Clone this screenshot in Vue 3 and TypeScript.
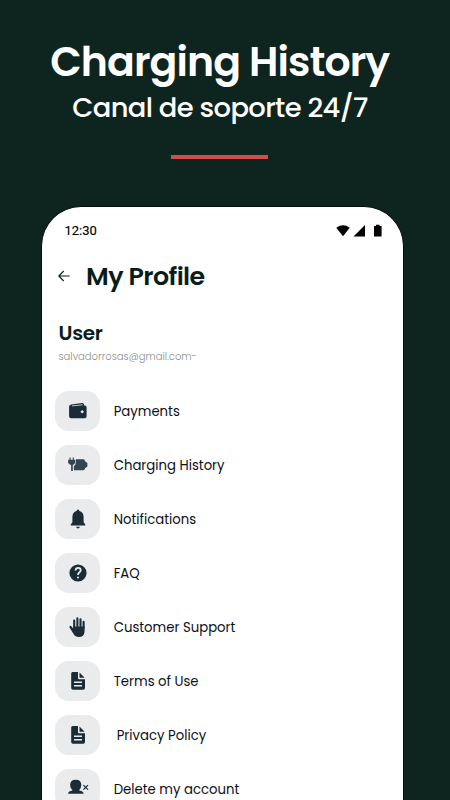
<script setup lang="ts">
interface MenuItem {
  icon: 'wallet' | 'charge' | 'bell' | 'help' | 'hand' | 'doc' | 'user'
  label: string
  indent?: boolean
}

const items: MenuItem[] = [
  { icon: 'wallet', label: 'Payments' },
  { icon: 'charge', label: 'Charging History' },
  { icon: 'bell', label: 'Notifications' },
  { icon: 'help', label: 'FAQ' },
  { icon: 'hand', label: 'Customer Support' },
  { icon: 'doc', label: 'Terms of Use' },
  { icon: 'doc', label: 'Privacy Policy', indent: true },
  { icon: 'user', label: 'Delete my account' },
]
</script>

<template>
  <main class="page">
    <header class="hero">
      <h1 class="title">Charging History</h1>
      <p class="subtitle">Canal de soporte 24/7</p>
      <div class="rule"></div>
    </header>

    <section class="phone">
      <div class="status">
        <span class="time">12:30</span>
        <svg class="status-icons" width="48" height="14" viewBox="0 0 48 14">
          <path d="M0.3 3.7Q7 -1.1 13.7 3.7L7 12.2Z" />
          <path d="M29 1V12.5H17.5Z" />
          <path d="M38 2.1h2V.7h3.6v1.4h2v10.4H38Z" />
        </svg>
      </div>

      <div class="heading">
        <svg class="back" width="12" height="12" viewBox="0 0 12 12">
          <path d="M11.7 6H.8M5.7 1L.8 6l4.9 5" />
        </svg>
        <h2 class="name">My Profile</h2>
      </div>

      <div class="account">
        <h3 class="user">User</h3>
        <p class="email">salvadorrosas@gmail.com-</p>
      </div>

      <ul class="menu">
        <li v-for="item in items" :key="item.label" class="row">
          <span class="tile">
            <svg class="icon" width="22" height="20" viewBox="0 0 22 20">
              <template v-if="item.icon === 'wallet'">
                <path d="M2.1 5.5Q2.1 3.7 4.2 3.4L15 2Q16.9 1.8 17.1 3.8V4.6H17.8Q19.6 4.6 19.6 6.6V15.3Q19.6 17.3 17.8 17.3H4.1Q2.1 17.3 2.1 15.3Z" />
                <path class="line-light" d="M5 4.9L15.6 3.8" />
                <path class="cut" d="M15.2 9l1.8 1.8-1.8 1.8-1.8-1.8Z" />
              </template>
              <template v-else-if="item.icon === 'charge'">
                <path class="slate" d="M8.8 4.2H16.4Q17.9 4.2 18 6.2L20.4 8V11.4L18 13.2Q17.9 15.2 16.4 15.2H6.9V10.9Q8.8 10 8.8 7.8Z" />
                <path class="slate" d="M2.5 2.4h1.1v2.3h2.1V2.4h1.1v2.3h1.3v3.4L6.5 9.7H5.8v6.2H4.1V9.7H3L1.2 8.1V4.7h1.3Z" />
              </template>
              <template v-else-if="item.icon === 'bell'">
                <path d="M11 .6q1.3 0 1.4 1.5Q16.5 3.3 16.6 7.8v5.4l1.7 2.3v1H3.7v-1l1.7-2.3V7.8q.1-4.5 4.2-5.7Q9.7.6 11 .6ZM9.2 17.8h3.6q-.3 1.6-1.8 1.6t-1.8-1.6Z" />
              </template>
              <template v-else-if="item.icon === 'help'">
                <circle cx="11" cy="10" r="8.6" />
                <path class="question" d="M8.5 7.5Q8.7 4.9 11.2 4.9T13.7 7.3Q13.7 8.5 12.3 9.5T11 12" />
                <circle class="cut" cx="11" cy="14.4" r="1" />
              </template>
              <template v-else-if="item.icon === 'hand'">
                <path d="M6.2 9.6H17.6V14Q17.4 20 12 20 8.3 20 6.4 16.8L2.4 10.2Q2.1 9.2 3 8.9 3.8 8.6 4.5 9.4L6.2 11.6Z" />
                <path class="finger" d="M7.2 11V3.6M10.4 11V1.4M13.5 11V2.4M16.6 11V4.8" />
              </template>
              <template v-else-if="item.icon === 'doc'">
                <path d="M5.6 1H11V7.2Q11 8.2 12 8.2H18V17Q18 18.8 16.2 18.8H6Q4.2 18.8 4.2 17V2.5Q4.2 1 5.6 1Z" />
                <path d="M12.5 1.5L17.6 6.8H12.5Z" />
                <path class="doc-line" d="M7 11.3h8M7 14.7h8" />
              </template>
              <template v-else>
                <path d="M8.7.8Q14.3.8 14.3 6 14.2 9 12.3 10.9V11.6Q16.2 12.2 16.7 14.7H1Q1.5 12.2 5.3 11.6V10.9Q3.2 9 3.1 6 3.3.8 8.7.8Z" />
                <path class="cross" d="M16.4 6.1l4.6 4.6M21 6.1l-4.6 4.6" />
              </template>
            </svg>
          </span>
          <span class="label" :class="{ indent: item.indent }">{{ item.label }}</span>
        </li>
      </ul>
    </section>
  </main>
</template>

<style>
body {
  margin: 0;
  background: #0e251f;
}
</style>

<style scoped>
.page {
  box-sizing: border-box;
  width: 450px;
  height: 800px;
  overflow: hidden;
  display: flex;
  flex-direction: column;
  background: #0e251f;
  font-family: Poppins, Inter, "Noto Sans", sans-serif;
  font-feature-settings: "cv11";
}
h1, h2, h3, p, ul {
  margin: 0;
  padding: 0;
}
.hero {
  box-sizing: border-box;
  flex: none;
  height: 206px;
  padding-top: 38px;
  display: flex;
  flex-direction: column;
  align-items: center;
  color: #fff;
  white-space: nowrap;
}
.title {
  font-size: 41px;
  line-height: 48px;
  font-weight: 600;
  letter-spacing: -0.022em;
  margin-right: 10.5px;
}
.subtitle {
  font-size: 27.4px;
  line-height: 44px;
  font-weight: 500;
  letter-spacing: -0.023em;
  margin-right: 10px;
}
.rule {
  width: 97px;
  height: 4px;
  margin: 25px 11px 0 0;
  background: #d64c47;
}
.phone {
  box-sizing: border-box;
  flex: 1;
  width: 363px;
  margin-left: 41px;
  border: 1px solid #050d0a;
  border-bottom: 0;
  border-radius: 40px 40px 0 0;
  background: #fff;
  overflow: hidden;
  color: #0a1c19;
}
.status {
  display: flex;
  justify-content: space-between;
  align-items: center;
  height: 14px;
  padding: 17px 19px 0 22.5px;
  color: #000;
}
.time {
  font: 400 13px/14px Roboto, sans-serif;
  -webkit-text-stroke: 0.15px #000;
}
.heading {
  display: flex;
  align-items: center;
  gap: 16px;
  height: 32px;
  padding: 22px 0 0 16px;
}
.back {
  fill: none;
  stroke: #0a1c19;
  stroke-width: 1.1;
}
.name {
  font-size: 25.3px;
  line-height: 32px;
  font-weight: 600;
  letter-spacing: -0.022em;
}
.account {
  padding: 29px 0 0 16.5px;
}
.user {
  font-size: 20px;
  line-height: 24px;
  font-weight: 600;
  letter-spacing: -0.015em;
}
.email {
  margin-top: 4px;
  font-size: 10px;
  line-height: 16px;
  font-weight: 300;
  color: #8c8c8c;
}
.menu {
  display: flex;
  flex-direction: column;
  gap: 14px;
  padding: 26px 0 0 13.3px;
  list-style: none;
}
.row {
  display: flex;
  align-items: center;
  gap: 13.7px;
  height: 40px;
}
.tile {
  flex: none;
  width: 44.7px;
  height: 40px;
  border-radius: 14px;
  display: flex;
  align-items: center;
  justify-content: center;
  background: #e9ebed;
}
.icon {
  fill: #1b2c37;
}
.slate {
  fill: #334550;
}
.cut {
  fill: #e9ebed;
}
.line-light {
  stroke: #e9ebed;
  stroke-width: 0.8;
}
.question {
  fill: none;
  stroke: #e9ebed;
  stroke-width: 1.8;
}
.finger {
  stroke: #1b2c37;
  stroke-width: 2.1;
  stroke-linecap: round;
}
.doc-line {
  stroke: #e9ebed;
  stroke-width: 1.5;
}
.cross {
  stroke: #1b2c37;
  stroke-width: 1.2;
}
.label {
  padding-top: 1px;
  font-size: 13.25px;
  line-height: 20px;
  color: #0b1018;
  white-space: nowrap;
}
.indent {
  margin-left: 3px;
}
</style>
